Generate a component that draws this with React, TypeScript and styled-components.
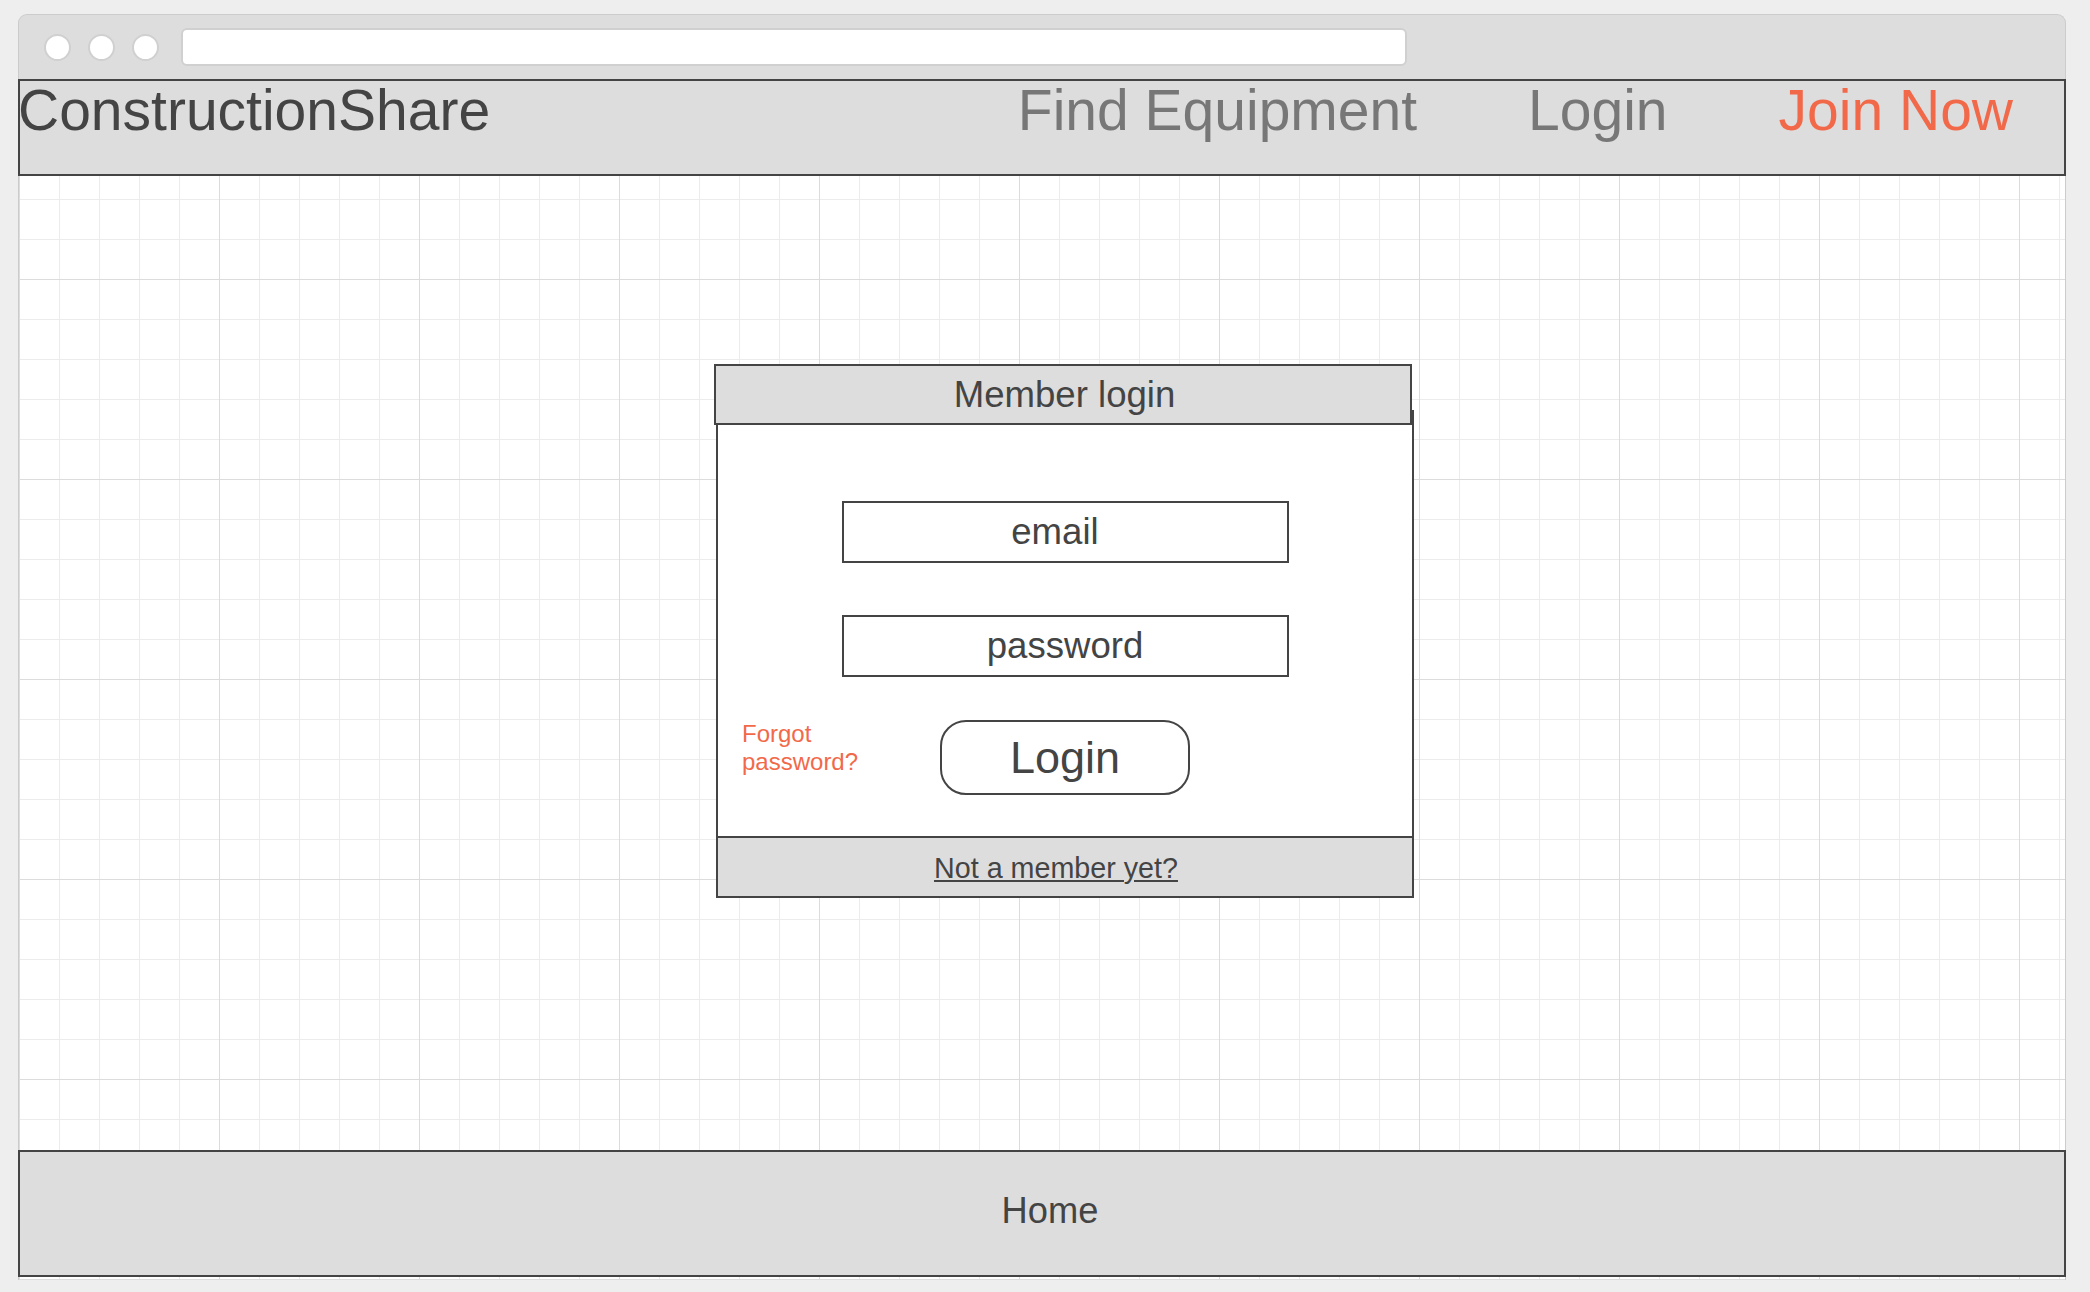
import React from "react";
import styled, { createGlobalStyle } from "styled-components";

const GlobalStyle = createGlobalStyle`
  html, body {
    margin: 0;
    padding: 0;
    background: #eeeeee;
  }
  body {
    font-family: "Liberation Sans", Arial, sans-serif;
    color: #444444;
  }
  * { box-sizing: border-box; }
`;

const Page = styled.div`
  padding: 14px 0 0 18px;
  width: 2090px;
  height: 1292px;
`;

const Window = styled.div`
  width: 2048px;
  height: 1266px;
  border: 1px solid #cccccc;
  border-bottom: none;
  border-radius: 9px 9px 0 0;
  background: #dddddd;
  display: flex;
  flex-direction: column;
`;

const TitleBar = styled.div`
  height: 64px;
  flex: none;
  display: flex;
  align-items: center;
  padding-left: 25px;
  gap: 17px;
`;

const Dot = styled.span`
  width: 27px;
  height: 27px;
  border-radius: 50%;
  background: #ffffff;
  border: 2px solid #d0d0d0;
  flex: none;
`;

const UrlBar = styled.div`
  margin-left: 5px;
  width: 1226px;
  height: 38px;
  background: #ffffff;
  border: 2px solid #d0d0d0;
  border-radius: 6px;
`;

const Canvas = styled.div`
  flex: 1;
  display: flex;
  flex-direction: column;
  background-color: #ffffff;
  background-image:
    linear-gradient(#dcdcdc 1px, transparent 1px),
    linear-gradient(90deg, #dcdcdc 1px, transparent 1px),
    linear-gradient(#ececec 1px, transparent 1px),
    linear-gradient(90deg, #ececec 1px, transparent 1px);
  background-size: 200px 200px, 200px 200px, 40px 40px, 40px 40px;
`;

const Header = styled.header`
  height: 97px;
  flex: none;
  margin: 0 -1px;
  border: 2px solid #444444;
  background: #dddddd;
  display: flex;
  align-items: flex-start;
  padding-right: 51px;
`;

const Brand = styled.div`
  margin-left: -2px;
  font-size: 57px;
  line-height: 58px;
  color: #444444;
`;

const Nav = styled.nav`
  margin-left: auto;
  display: flex;
  gap: 111px;
`;

const NavLink = styled.a<{ $accent?: boolean }>`
  font-size: 57px;
  line-height: 58px;
  color: ${(p) => (p.$accent ? "#f2694a" : "#777777")};
  text-decoration: none;
  cursor: pointer;
`;

const Main = styled.main`
  height: 974px;
  flex: none;
  padding: 188px 0 0 695px;
`;

const Card = styled.section`
  width: 700px;
  display: flex;
  flex-direction: column;
`;

const CardHeader = styled.div`
  position: relative;
  z-index: 1;
  width: 698px;
  height: 61px;
  border: 2px solid #444444;
  background: #dddddd;
  margin-bottom: -15px;
  display: flex;
  align-items: center;
  justify-content: center;
  padding-left: 3px;
  font-size: 36.6px;
  color: #444444;
`;

const CardBody = styled.div`
  margin-left: 2px;
  width: 698px;
  height: 488px;
  border: 2px solid #444444;
  background: #ffffff;
  display: flex;
  flex-direction: column;
`;

const Form = styled.div`
  height: 424px;
  padding-top: 89px;
  display: flex;
  flex-direction: column;
  align-items: center;
`;

const Field = styled.div<{ $shift?: number; $gap?: number }>`
  width: 447px;
  height: 62px;
  flex: none;
  margin-top: ${(p) => p.$gap ?? 0}px;
  border: 2px solid #444444;
  display: flex;
  align-items: center;
  justify-content: center;
  padding-right: ${(p) => p.$shift ?? 0}px;
  font-size: 36.6px;
  color: #444444;
`;

const ActionRow = styled.div`
  margin-top: 43px;
  width: 100%;
  display: grid;
  grid-template-columns: 1fr 250px 1fr;
  align-items: start;
`;

const Forgot = styled.a`
  padding-left: 24px;
  font-size: 24px;
  line-height: 28px;
  color: #f2694a;
  cursor: pointer;
`;

const LoginButton = styled.button`
  width: 250px;
  height: 75px;
  border: 2px solid #444444;
  border-radius: 26px;
  background: #ffffff;
  font-family: "Liberation Sans", Arial, sans-serif;
  font-size: 45px;
  color: #444444;
  padding: 0;
  cursor: pointer;
`;

const CardFooter = styled.div`
  flex: 1;
  border-top: 2px solid #444444;
  background: #dddddd;
  display: flex;
  align-items: center;
  justify-content: center;
  padding: 2px 18px 0 0;
`;

const JoinLink = styled.a`
  font-size: 28.7px;
  color: #444444;
  text-decoration: underline;
  cursor: pointer;
`;

const Footer = styled.footer`
  height: 127px;
  flex: none;
  margin: 0 -1px;
  border: 2px solid #444444;
  background: #dddddd;
  display: flex;
  align-items: center;
  justify-content: center;
  padding: 0 0 6px 16px;
  font-size: 36.3px;
  color: #444444;
`;

export default function App() {
  return (
    <>
      <GlobalStyle />
      <Page>
        <Window>
          <TitleBar>
            <Dot />
            <Dot />
            <Dot />
            <UrlBar />
          </TitleBar>
          <Canvas>
            <Header>
              <Brand>ConstructionShare</Brand>
              <Nav>
                <NavLink>Find Equipment</NavLink>
                <NavLink>Login</NavLink>
                <NavLink $accent>Join Now</NavLink>
              </Nav>
            </Header>
            <Main>
              <Card>
                <CardHeader>Member login</CardHeader>
                <CardBody>
                  <Form>
                    <Field $shift={20}>email</Field>
                    <Field $gap={52}>password</Field>
                    <ActionRow>
                      <Forgot>
                        Forgot
                        <br />
                        password?
                      </Forgot>
                      <LoginButton>Login</LoginButton>
                    </ActionRow>
                  </Form>
                  <CardFooter>
                    <JoinLink>Not a member yet?</JoinLink>
                  </CardFooter>
                </CardBody>
              </Card>
            </Main>
            <Footer>Home</Footer>
          </Canvas>
        </Window>
      </Page>
    </>
  );
}
